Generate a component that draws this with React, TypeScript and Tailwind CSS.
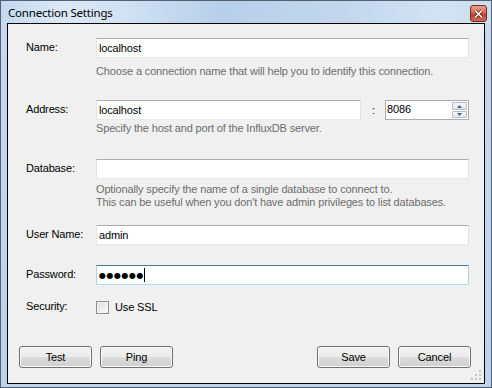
import React from "react"

// Win7 style "Connection Settings" dialog

function TextBox({ value, width, focused }: { value?: string; width: string; focused?: boolean }) {
  return (
    <div
      className={
        "h-[20px] flex items-center pl-[2px] bg-white border " +
        width +
        (focused
          ? " border-t-[#3d7bad] border-l-[#b5cfe7] border-r-[#b5cfe7] border-b-[#b7d9ed]"
          : " border-t-[#abadb3] border-l-[#e2e3ea] border-r-[#e2e3ea] border-b-[#e3e9ef]")
      }
    >
      <span className="leading-[13px]">{value}</span>
    </div>
  )
}

function Label({ children }: { children: React.ReactNode }) {
  return <div className="w-[88px] pl-[18px] leading-[13px] -mt-[2px]">{children}</div>
}

function Hint({ children }: { children: React.ReactNode }) {
  return <div className="ml-[88px] leading-[13px] text-[#6d6d6d]">{children}</div>
}

function Btn({ children }: { children: React.ReactNode }) {
  return (
    <div className="w-[73px] h-[22px] rounded-[3px] border border-[#707070] bg-[linear-gradient(to_bottom,#f2f2f2_0%,#ebebeb_50%,#dddddd_50%,#cfcfcf_100%)] shadow-[inset_0_0_0_1px_#fcfcfc] flex items-center justify-center leading-[13px]">
      {children}
    </div>
  )
}

export default function App() {
  return (
    <div className="w-[492px] h-[388px] border border-[#55606e] bg-[linear-gradient(to_bottom,#c6daf0,#bcd3ec)] flex flex-col font-['Liberation_Sans',Arial,sans-serif] text-[11px] tracking-[-0.15px] text-black">
      {/* title bar */}
      <div className="h-[22px] flex items-start justify-between bg-[linear-gradient(to_right,#c3d8ef_0%,#dbe8f6_12%,#d2e2f4_25%,#b6cfea_45%,#c2d7ee_70%,#d4e3f4_90%,#cadcf1_100%)]">
        <div className="pl-[7px] pt-[4px] text-[11.5px] tracking-[-0.2px] leading-[15px] font-['Noto_Sans',sans-serif] text-black">
          Connection Settings
        </div>
        <div className="mt-[4px] mr-[4px] w-[17px] h-[17px] rounded-[3px] border border-[#6e2d20] bg-[linear-gradient(to_bottom,#eaa08c_0%,#d6694f_45%,#c0432a_55%,#d06a4c_100%)] flex items-center justify-center">
          <svg width="9" height="8" viewBox="0 0 9 8">
            <path d="M1 0.5 L8 7.5 M8 0.5 L1 7.5" stroke="#4a1a10" strokeWidth="3" />
            <path d="M1 0.5 L8 7.5 M8 0.5 L1 7.5" stroke="#ffffff" strokeWidth="1.6" />
          </svg>
        </div>
      </div>

      {/* client area */}
      <div className="relative mx-[6px] mb-[3px] flex-1 border border-black bg-[#f0f0f0] flex flex-col">
        <div className="mt-[14px] flex items-center">
          <Label>Name:</Label>
          <TextBox value="localhost" width="w-[373px]" />
        </div>
        <div className="mt-[7px]">
          <Hint>Choose a connection name that will help you to identify this connection.</Hint>
        </div>

        <div className="mt-[22px] flex items-center">
          <Label>Address:</Label>
          <TextBox value="localhost" width="w-[265px]" />
          <div className="w-[24px] pl-[11px] leading-[13px]">:</div>
          <div className="w-[84px] h-[20px] bg-white border border-[#abadb3] flex items-center justify-between">
            <span className="pl-[1px] leading-[13px] -mt-[2px]">8086</span>
            <div className="mr-[1px] w-[15px] h-[16px] flex flex-col gap-[1px]">
              <div className="h-[8px] rounded-[1px] border border-[#b5bcc7] bg-[linear-gradient(to_bottom,#f6f7f9,#e1e6ed)] flex items-center justify-center">
                <svg width="5" height="3" viewBox="0 0 5 3">
                  <path d="M0 3 L2.5 0 L5 3 Z" fill="#4d6185" />
                </svg>
              </div>
              <div className="h-[7px] rounded-[1px] border border-[#b5bcc7] bg-[linear-gradient(to_bottom,#f6f7f9,#e1e6ed)] flex items-center justify-center">
                <svg width="5" height="3" viewBox="0 0 5 3">
                  <path d="M0 0 L2.5 3 L5 0 Z" fill="#4d6185" />
                </svg>
              </div>
            </div>
          </div>
        </div>
        <div className="mt-[2px]">
          <Hint>Specify the host and port of the InfluxDB server.</Hint>
        </div>

        <div className="mt-[24px] flex items-center">
          <Label>Database:</Label>
          <TextBox width="w-[373px]" />
        </div>
        <div className="mt-[4px]">
          <Hint>
            Optionally specify the name of a single database to connect to.
            <br />
            This can be useful when you don't have admin privileges to list databases.
          </Hint>
        </div>

        <div className="mt-[16px] flex items-center">
          <Label>User Name:</Label>
          <TextBox value="admin" width="w-[373px]" />
        </div>

        <div className="mt-[20px] flex items-center">
          <Label>Password:</Label>
          <div className="w-[373px] h-[20px] flex items-center pl-[2px] bg-white border border-t-[#3d7bad] border-l-[#b5cfe7] border-r-[#b5cfe7] border-b-[#b7d9ed]">
            <span className="font-['DejaVu_Sans',sans-serif] text-[8px] leading-[13px] tracking-[0.5px]">●●●●●●</span>
            <span className="w-[1px] h-[14px] bg-black" />
          </div>
        </div>

        <div className="mt-[16px] flex items-center h-[13px]">
          <Label>Security:</Label>
          <div className="w-[13px] h-[13px] border border-[#8e8f8f] bg-[linear-gradient(to_bottom_right,#dcdcdc,#fbfbfb)] shadow-[inset_0_0_0_1px_#f4f4f4]" />
          <div className="pl-[6px] leading-[13px] -mt-[1px]">Use SSL</div>
        </div>

        <div className="mt-[32px] pl-[11px] pr-[13px] flex">
          <div className="flex gap-[8px]">
            <Btn>Test</Btn>
            <Btn>Ping</Btn>
          </div>
          <div className="ml-auto flex gap-[8px]">
            <Btn>Save</Btn>
            <Btn>Cancel</Btn>
          </div>
        </div>

        {/* size grip */}
        <svg className="absolute right-[2px] bottom-[2px]" width="11" height="11" viewBox="0 0 11 11">
          {[
            [8, 0],
            [8, 4],
            [4, 4],
            [8, 8],
            [4, 8],
            [0, 8],
          ].map(([x, y], i) => (
            <rect key={i} x={x} y={y} width="2" height="2" fill="#c4c4c4" />
          ))}
        </svg>
      </div>
    </div>
  )
}
